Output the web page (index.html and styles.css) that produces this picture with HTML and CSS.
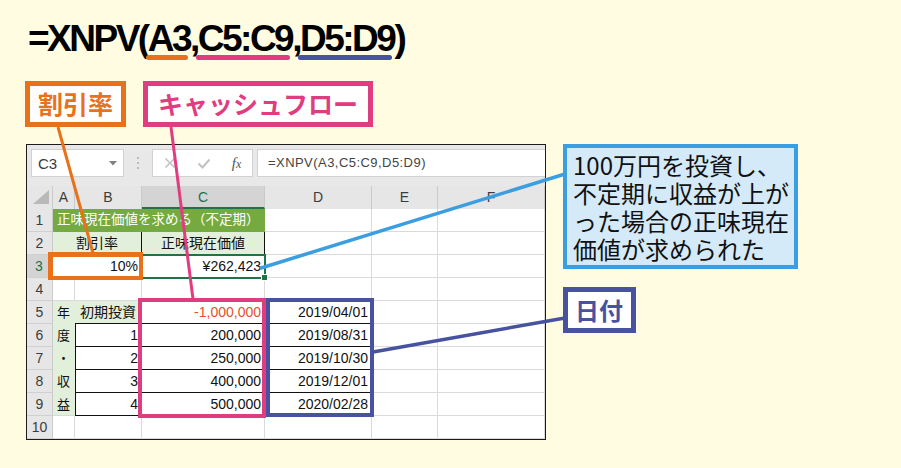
FILE: index.html
```html
<!DOCTYPE html>
<html lang="ja">
<head>
<meta charset="utf-8">
<title>XNPV</title>
<link rel="stylesheet" href="styles.css">
</head>
<body>
<div class="page">
  <div class="formula">=XNPV(<span class="u u-or">A3</span>,<span class="u u-pk">C5:C9</span>,<span class="u u-bl">D5:D9</span>)</div>
  <div class="labels">
    <div class="tag tag-or">割引率</div>
    <div class="tag tag-pk">キャッシュフロー</div>
  </div>
  <div class="main">
    <div class="excel">
      <div class="fbar">
        <div class="namebox"><span>C3</span><svg class="dd" width="8" height="5" viewBox="0 0 8 5"><polygon points="0,0 8,0 4,4.5" fill="#808080"/></svg></div>
        <div class="sep"><svg width="4" height="14" viewBox="0 0 4 14"><circle cx="2" cy="2" r="1.1" fill="#b0b0b0"/><circle cx="2" cy="7" r="1.1" fill="#b0b0b0"/><circle cx="2" cy="12" r="1.1" fill="#b0b0b0"/></svg></div>
        <div class="btns">
          <span class="slot s1"><svg width="12" height="12" viewBox="0 0 12 12"><path d="M1.5 1.5 L10.5 10.5 M10.5 1.5 L1.5 10.5" stroke="#c2c2c2" stroke-width="1.6" fill="none"/></svg></span>
          <span class="slot s2"><svg width="14" height="11" viewBox="0 0 14 11"><path d="M1.5 5.5 L5.5 9.5 L12.5 1.5" stroke="#c2c2c2" stroke-width="2" fill="none"/></svg></span>
          <span class="slot s3 fx"><i>f</i><i class="x">x</i></span>
        </div>
        <div class="finput">=XNPV(A3,C5:C9,D5:D9)</div>
      </div>
      <div class="grid">
        <div class="h corner"><svg width="18" height="15" viewBox="0 0 18 15"><polygon points="17,0 17,14 1,14" fill="#b9b9b9"/></svg></div>
        <div class="h">A</div><div class="h">B</div><div class="h hsel-c">C</div><div class="h">D</div><div class="h">E</div><div class="h">F</div>

        <div class="h rh">1</div><div class="c title span3">正味現在価値を求める（不定期）</div><div class="c"></div><div class="c"></div><div class="c"></div>

        <div class="h rh">2</div><div class="c lg ctr span2 bk">割引率</div><div class="c lg ctr bk">正味現在価値</div><div class="c"></div><div class="c"></div><div class="c"></div>

        <div class="h rh hsel-r">3</div><div class="c r span2">10%</div><div class="c r">¥262,423</div><div class="c"></div><div class="c"></div><div class="c"></div>

        <div class="h rh">4</div><div class="c"></div><div class="c"></div><div class="c"></div><div class="c"></div><div class="c"></div><div class="c"></div>

        <div class="h rh">5</div>
        <div class="c lg vert"><span>年</span><span>度</span><span>・</span><span>収</span><span>益</span></div>
        <div class="c lg ctr bb">初期投資</div><div class="c r bk neg">-1,000,000</div><div class="c r bk">2019/04/01</div><div class="c"></div><div class="c"></div>

        <div class="h rh">6</div><div class="c r bk bl">1</div><div class="c r bk">200,000</div><div class="c r bk">2019/08/31</div><div class="c"></div><div class="c"></div>
        <div class="h rh">7</div><div class="c r bk bl">2</div><div class="c r bk">250,000</div><div class="c r bk">2019/10/30</div><div class="c"></div><div class="c"></div>
        <div class="h rh">8</div><div class="c r bk bl">3</div><div class="c r bk">400,000</div><div class="c r bk">2019/12/01</div><div class="c"></div><div class="c"></div>
        <div class="h rh">9</div><div class="c r bk bl">4</div><div class="c r bk">500,000</div><div class="c r bk">2020/02/28</div><div class="c"></div><div class="c"></div>

        <div class="h rh">10</div><div class="c"></div><div class="c"></div><div class="c"></div><div class="c"></div><div class="c"></div><div class="c"></div>

        <div class="sel"></div>
        <div class="handle"></div>
        <div class="box box-or"></div>
        <div class="box box-pk"></div>
        <div class="box box-bl"></div>
      </div>
    </div>
    <div class="notes">
      <div class="note"><span class="ln">100万円を投資し、</span><span class="ln">不定期に収益が上が</span><span class="ln">った場合の正味現在</span><span class="ln">価値が求められた</span></div>
      <div class="tag tag-bl">日付</div>
    </div>
  </div>
  <svg class="lines" width="901" height="468" viewBox="0 0 901 468">
    <line x1="58" y1="127" x2="93" y2="253" stroke="#e8711b" stroke-width="3"/>
    <line x1="171" y1="127" x2="193" y2="299" stroke="#df3d7f" stroke-width="3"/>
    <line x1="261" y1="268" x2="565" y2="174" stroke="#3b9ee0" stroke-width="3.5" stroke-linecap="round"/>
    <line x1="373" y1="352" x2="565" y2="318" stroke="#4752a0" stroke-width="3.5"/>
  </svg>
</div>
</body>
</html>
```

FILE: styles.css
```css
* { box-sizing: border-box; }
html, body { margin: 0; padding: 0; }
body { background: #fffce1; }

.page {
  position: relative;
  width: 901px;
  height: 468px;
  overflow: hidden;
  background: #fffce1;
  font-family: "Liberation Sans", "Noto Sans CJK JP", sans-serif;
}

.formula {
  padding: 19px 0 0 28px;
  height: 59px;
  font-family: "Liberation Sans", sans-serif;
  font-weight: 700;
  font-size: 37px;
  line-height: 40px;
  letter-spacing: -2.5px;
  color: #000;
  white-space: nowrap;
}
.u { position: relative; }
.u::after {
  content: "";
  position: absolute;
  left: -2px;
  right: 2px;
  bottom: -1px;
  height: 5px;
  border-radius: 3px;
}
.u-or::after { background: #e8711b; }
.u-pk::after { background: #df3d7f; }
.u-bl::after { background: #4752a0; }

.labels {
  margin-top: 22px;
  padding-left: 25px;
  display: flex;
  gap: 17px;
}
.tag {
  height: 46px;
  border: 5px solid;
  background: #fff;
  font-family: "Noto Sans CJK JP", sans-serif;
  font-weight: 700;
  font-size: 25px;
  line-height: 35px;
  white-space: nowrap;
}
.tag-or { border-color: #e8711b; color: #e8711b; padding: 0 8px; }
.tag-pk { border-color: #df3d7f; color: #df3d7f; padding: 0 10px; }
.tag-bl { border-color: #4752a0; color: #4752a0; padding: 0 7px; width: 73px; font-size: 24px; }

.main {
  margin-top: 17px;
  padding-left: 26px;
  display: flex;
  gap: 17px;
  align-items: flex-start;
}

.excel {
  width: 520px;
  height: 296px;
  border: 1px solid #1c1c1c;
  background: #e8e8e8;
}

.fbar {
  height: 41px;
  display: flex;
  padding: 4px 0 0 4px;
}
.namebox {
  width: 93px;
  height: 28px;
  background: #fff;
  border: 1px solid #d2d2d2;
  display: flex;
  align-items: center;
  justify-content: space-between;
  padding: 0 6px 0 6px;
  font-size: 15px;
  color: #3a3a3a;
}
.namebox .dd { margin-top: 1px; }
.sep {
  width: 28px;
  height: 28px;
  display: flex;
  align-items: center;
  justify-content: center;
}
.btns {
  width: 101px;
  height: 28px;
  background: #fff;
  border: 1px solid #d2d2d2;
  display: flex;
  align-items: center;
}
.slot { display: flex; align-items: center; justify-content: center; height: 26px; }
.s1 { width: 33px; }
.s2 { width: 35px; }
.s3 { width: 31px; }
.fx {
  font-family: "Liberation Serif", serif;
  font-size: 15px;
  color: #555;
}
.fx i { font-style: italic; }
.fx .x { font-size: 12px; margin-top: 3px; }
.finput {
  flex: 1;
  margin-left: 4px;
  height: 28px;
  background: #fff;
  border: 1px solid #d2d2d2;
  border-right: none;
  padding-left: 10px;
  font-size: 13px;
  line-height: 26px;
  letter-spacing: 0.45px;
  color: #444;
  white-space: nowrap;
}

.grid {
  position: relative;
  display: grid;
  grid-template-columns: 26px 22px 67px 123px 107px 66px 1fr;
  grid-auto-rows: 23px;
  background: #fff;
}
.h {
  background: #e6e6e6;
  color: #3c3c3c;
  text-align: center;
  font-size: 14px;
  line-height: 23px;
  border-right: 1px solid #cacaca;
}
.grid > .h:nth-child(-n+7) { line-height: 22px; }
.rh { border-bottom: 1px solid #d0d0d0; line-height: 22px; }
.corner { display: flex; align-items: flex-end; justify-content: flex-end; padding: 0 2px 4px 0; }
.hsel-c { background: #d4d4d4; color: #217346; border-bottom: 2px solid #217346; }
.hsel-r { background: #d4d4d4; color: #217346; border-right: 2px solid #217346; }

.c {
  border-right: 1px solid #dadada;
  border-bottom: 1px solid #dadada;
  font-family: "Liberation Sans", "Noto Sans CJK JP", sans-serif;
  font-size: 14px;
  line-height: 22px;
  padding: 0 3px;
  color: #111;
  white-space: nowrap;
  overflow: hidden;
}
.r { text-align: right; }
.ctr { text-align: center; }
.span2 { grid-column: span 2; }
.span3 { grid-column: span 3; }
.title {
  background: #74aa40;
  border-right-color: #74aa40;
  border-bottom-color: #74aa40;
  color: #fff;
  font-size: 13.5px;
  padding-left: 4px;
}
.lg { background: #e2efda; }
.bk { border-right-color: #111; border-bottom-color: #111; }
.bb { border-bottom-color: #111; border-right-color: #111; }
.bl { border-left: 1px solid #111; }
.neg { color: #e4502e; }
.vert {
  grid-row: span 5;
  display: flex;
  flex-direction: column;
  padding: 0;
  border-right-color: #e2efda;
  font-size: 13px;
}
.vert span { height: 23px; line-height: 23px; text-align: center; flex: none; }

.sel {
  position: absolute;
  left: 114px;
  top: 68px;
  width: 125px;
  height: 25px;
  border: 2px solid #217346;
}
.handle {
  position: absolute;
  left: 234px;
  top: 88px;
  width: 7px;
  height: 7px;
  background: #217346;
  border: 1px solid #fff;
}
.box { position: absolute; border: 4px solid; }
.box-or { left: 21px; top: 66px; width: 95px; height: 28px; border-color: #e8711b; border-width: 5px 4px 4px 5px; }
.box-pk { left: 111px; top: 112px; width: 128px; height: 120px; border-color: #df3d7f; }
.box-bl { left: 239px; top: 112px; width: 108px; height: 119px; border-color: #4752a0; }

.notes {
  display: flex;
  flex-direction: column;
  align-items: flex-start;
  gap: 18px;
}
.note {
  width: 235px;
  height: 125px;
  border: 4px solid #3b9ee0;
  background: #d5eaf8;
  padding: 3px 4px 0 6px;
  font-family: "Noto Sans CJK JP", sans-serif;
  font-weight: 400;
  font-size: 24px;
  line-height: 28px;
  color: #111;
  white-space: nowrap;
}
.ln { display: block; height: 28px; }

.lines {
  position: absolute;
  left: 0;
  top: 0;
  pointer-events: none;
}
```
